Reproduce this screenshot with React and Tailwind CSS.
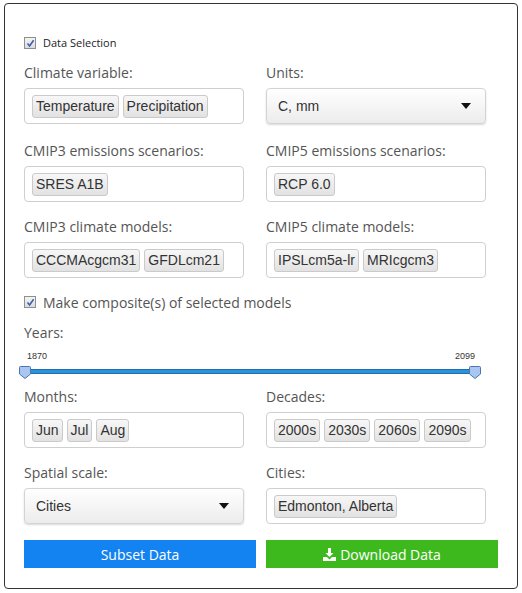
import React from "react";

const sans = { fontFamily: '"Open Sans", "Noto Sans", sans-serif' };

function Check() {
  return (
    <span className="inline-flex h-[12px] w-[12px] items-center justify-center border border-[#8e8f8f] bg-gradient-to-b from-[#f4f4f4] to-[#dcdcdc]">
      <svg width="9" height="9" viewBox="0 0 9 9">
        <path d="M1.5 4.5 L3.6 7 L7.6 1.2" fill="none" stroke="#3a5fae" strokeWidth="1.6" />
      </svg>
    </span>
  );
}

function Chip({ children }) {
  return (
    <span className="inline-flex h-[23px] items-center rounded-[3px] border border-[#cacaca] bg-gradient-to-b from-[#f7f7f7] to-[#e2e2e2] px-[3px] font-['Liberation_Sans',Arial,sans-serif] text-[14px] text-[#333]">
      {children}
    </span>
  );
}

function Field({ label, children, className = "" }) {
  return (
    <div className={"w-[220px] " + className}>
      <div className="h-[20px] text-[14px] leading-[20px] text-[#555]" style={sans}>
        {label}
      </div>
      <div className="mt-[5px]">{children}</div>
    </div>
  );
}

function ChipBox({ items }) {
  return (
    <div className="flex h-[36px] items-center gap-[4px] rounded-[4px] border border-[#cfcfcf] bg-white pl-[7px]">
      {items.map((t) => (
        <Chip key={t}>{t}</Chip>
      ))}
    </div>
  );
}

function Select({ value }) {
  return (
    <div className="flex h-[36px] items-center justify-between rounded-[4px] border border-[#d3d3d3] bg-gradient-to-b from-white to-[#ececec] pl-[11px] pr-[14px] font-['Liberation_Sans',Arial,sans-serif] text-[14px] text-[#333] shadow-[0_1px_2px_rgba(0,0,0,0.15)]">
      <span>{value}</span>
      <svg width="10" height="6" viewBox="0 0 10 6">
        <path d="M0 0 H10 L5 6 Z" fill="#111" />
      </svg>
    </div>
  );
}

function Handle() {
  return (
    <svg width="12" height="13" viewBox="0 0 12 13">
      <path d="M1.5 0.5 H10.5 Q11.5 0.5 11.5 1.5 V8 L6 12.5 L0.5 8 V1.5 Q0.5 0.5 1.5 0.5 Z" fill="#a9c7ee" stroke="#4a74b8" />
    </svg>
  );
}

export default function App() {
  return (
    <div className="bg-white pl-[4px] pt-[3px]">
      <div className="h-[586px] w-[514px] rounded-[4px] border border-[#333] pl-[19px] pt-[32px]">
        {/* Data selection toggle */}
        <div className="flex h-[14px] items-center gap-[7px]">
          <Check />
          <span className="text-[11px] text-[#222]" style={sans}>
            Data Selection
          </span>
        </div>

        <div className="mt-[13px] flex gap-[22px]">
          <Field label="Climate variable:">
            <ChipBox items={["Temperature", "Precipitation"]} />
          </Field>
          <Field label="Units:">
            <Select value="C, mm" />
          </Field>
        </div>

        <div className="mt-[17px] flex gap-[22px]">
          <Field label="CMIP3 emissions scenarios:">
            <ChipBox items={["SRES A1B"]} />
          </Field>
          <Field label="CMIP5 emissions scenarios:">
            <ChipBox items={["RCP 6.0"]} />
          </Field>
        </div>

        <div className="mt-[15px] flex gap-[22px]">
          <Field label="CMIP3 climate models:">
            <ChipBox items={["CCCMAcgcm31", "GFDLcm21"]} />
          </Field>
          <Field label="CMIP5 climate models:">
            <ChipBox items={["IPSLcm5a-lr", "MRIcgcm3"]} />
          </Field>
        </div>

        <div className="mt-[17px] flex h-[14px] items-center gap-[7px]">
          <Check />
          <span className="text-[14px] text-[#555]" style={sans}>
            Make composite(s) of selected models
          </span>
        </div>

        {/* Years slider */}
        <div className="mt-[14px] h-[20px] text-[14px] leading-[20px] text-[#555]" style={sans}>
          Years:
        </div>
        <div className="-ml-[5px] mt-[8px] w-[462px]">
          <div className="flex justify-between pl-[8px] pr-[6px] font-['Liberation_Sans',Arial,sans-serif] text-[9px] leading-[10px] text-[#333]">
            <span>1870</span>
            <span>2099</span>
          </div>
          <div className="relative mt-[5px] h-[13px]">
            <div className="absolute left-[5px] right-[6px] top-[3px] h-[5px] rounded-[2px] border border-[#1d6fb0] bg-[#2d93d9]" />
            <div className="absolute left-0 top-0">
              <Handle />
            </div>
            <div className="absolute left-[450px] top-0">
              <Handle />
            </div>
          </div>
        </div>

        <div className="mt-[8px] flex gap-[22px]">
          <Field label="Months:">
            <ChipBox items={["Jun", "Jul", "Aug"]} />
          </Field>
          <Field label="Decades:">
            <ChipBox items={["2000s", "2030s", "2060s", "2090s"]} />
          </Field>
        </div>

        <div className="mt-[15px] flex gap-[22px]">
          <Field label="Spatial scale:">
            <Select value="Cities" />
          </Field>
          <Field label="Cities:">
            <ChipBox items={["Edmonton, Alberta"]} />
          </Field>
        </div>

        <div className="mt-[16px] flex gap-[10px]">
          <button className="flex h-[28px] w-[232px] items-center justify-center bg-[#1383f1] text-[14px] text-white" style={sans}>
            Subset Data
          </button>
          <button className="flex h-[28px] w-[232px] items-center justify-center gap-[4px] bg-[#3eb91d] text-[14px] text-white" style={sans}>
            <svg width="13" height="13" viewBox="0 0 13 13">
              <path d="M5 0 H8 V5 H10.5 L6.5 9 L2.5 5 H5 Z" fill="#fff" />
              <path d="M0 9 H4 L6.5 11.5 L9 9 H13 V13 H0 Z" fill="#fff" />
            </svg>
            Download Data
          </button>
        </div>
      </div>
    </div>
  );
}
